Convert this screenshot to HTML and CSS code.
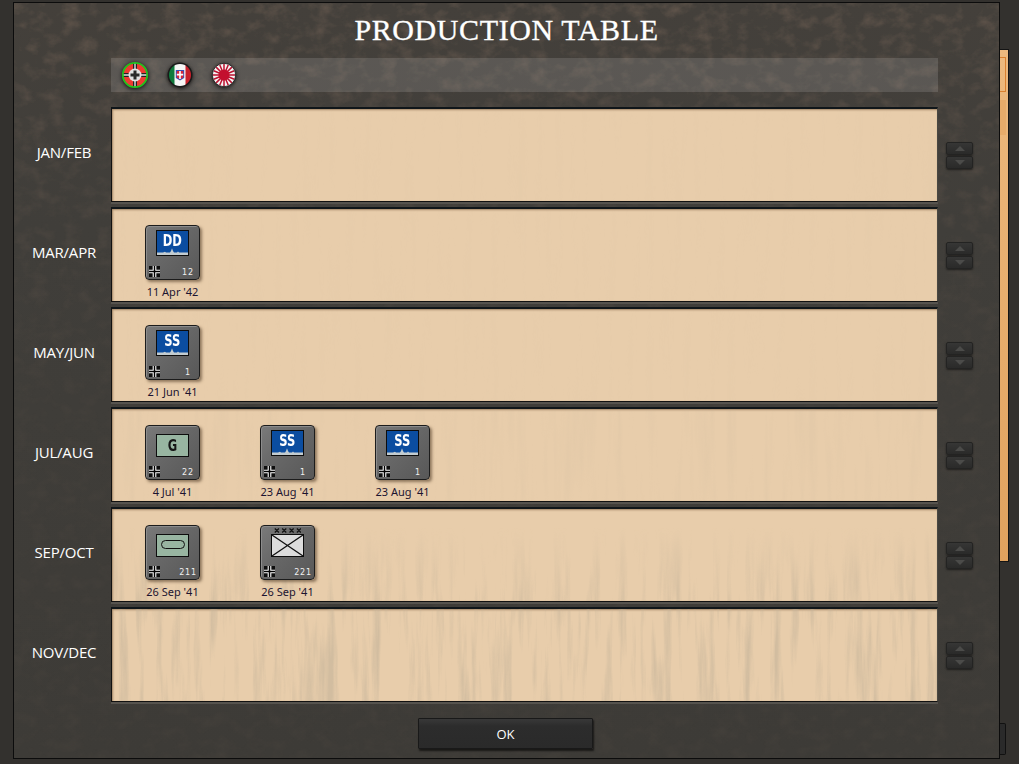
FILE: index.html
```html
<!DOCTYPE html>
<html lang="en">
<head>
    <meta charset="UTF-8">
    <title>Production Table</title>
    <link rel="stylesheet" href="styles.css">
</head>
<body>

<!-- shapes used by the counters and the nation bar -->
<svg class="defs" width="0" height="0" aria-hidden="true">
    <defs>
        <symbol id="cross" viewBox="0 0 12 12">
            <path d="M0 0h12v12H0z" fill="#0a0a0a" opacity=".95"/>
            <path d="M4 0h4v4h4v4H8v4H4V8H0V4h4z" fill="#fff"/>
            <path d="M5.200 0h1.600v5.200H12v1.600H6.800V12H5.200V6.800H0V5.200h5.200z" fill="#000"/>
        </symbol>
        <symbol id="ship" viewBox="0 0 31 6" preserveAspectRatio="none">
            <path d="M0 6V4.200h6l2-.7 1 .7h4l1-1.200 1-2 1 2 1 1.200h3l1-.8 1 .8h9V6z" fill="#c3ccd0"/>
        </symbol>
    </defs>
</svg>

<div class="behind-strip"></div>
<div class="behind-button"></div>

<div class="dialog">
    <h1 class="title">PRODUCTION TABLE</h1>

    <div class="nations">
        <svg class="flag flag-active" viewBox="0 0 28 28">
            <circle cx="14" cy="14" r="12.500" fill="#ee3a32"/>
            <path d="M1.500 12h25v4h-25zM12 1.500h4v25h-4z" fill="#222"/>
            <path d="M1.500 13.300h25v1.400h-25zM13.300 1.500h1.400v25h-1.400z" fill="#ddd"/>
            <circle cx="14" cy="14" r="6.500" fill="#e2e2e2"/>
            <path d="M12.500 9.500h3v3h3v3h-3v3h-3v-3h-3v-3h3z" fill="#2a2a2a"/>
            <circle cx="14" cy="14" r="12.200" fill="none" stroke="#1fc41c" stroke-width="1.800"/>
        </svg>
        <svg class="flag" viewBox="0 0 28 28">
            <clipPath id="italy"><circle cx="14" cy="14" r="11"/></clipPath>
            <circle cx="14" cy="14" r="12.500" fill="#1a1a1a"/>
            <g clip-path="url(#italy)">
                <path d="M3 3h6v22H3z" fill="#0f7a3c"/>
                <path d="M19 3h6v22h-6z" fill="#c8202c"/>
                <path d="M8.500 3h11v22h-11z" fill="#f6f6f6"/>
                <path d="M9.800 9h8.400v8l-4.200 2.500L9.800 17z" fill="#3a50b8"/>
                <path d="M10.800 10h6.400v6.500L14 18.300l-3.200-1.800z" fill="#d8283a"/>
                <path d="M13.200 10h1.600v8h-1.600zM10.800 12.800h6.400v1.600h-6.400z" fill="#fff"/>
            </g>
        </svg>
        <svg class="flag" viewBox="0 0 28 28">
            <circle cx="14" cy="14" r="11.500" fill="#f6f2f2"/>
            <g stroke="#bb1230" stroke-width="1.500">
                <path d="M14 14V2.800M14 14l4.300-10.300M14 14l7.900-7.900M14 14l10.300-4.300M14 14h11.200M14 14l10.300 4.300M14 14l7.900 7.900M14 14l4.300 10.300M14 14v11.200M14 14l-4.300 10.300M14 14l-7.900 7.900M14 14L3.700 18.300M14 14H2.800M14 14L3.700 9.700M14 14L6.100 6.100M14 14L9.700 3.700"/>
            </g>
            <circle cx="14" cy="14" r="5.500" fill="#c3102e"/>
            <circle cx="14" cy="14" r="11.700" fill="none" stroke="#1a1a1a" stroke-width=".8"/>
        </svg>
    </div>

    <div class="schedule">
        <div class="turn">
            <div class="month">JAN/FEB</div>
            <div class="paper stain-1"></div>
            <div class="spinner"><button class="spin spin-up"></button><button class="spin spin-down"></button></div>
        </div>

        <div class="turn">
            <div class="month">MAR/APR</div>
            <div class="paper stain-1">
                <div class="unit">
                    <div class="counter">
                        <div class="box box-sea"><span>DD</span><svg class="ship"><use href="#ship"/></svg></div>
                        <svg class="cross"><use href="#cross"/></svg>
                        <span class="strength">12</span>
                    </div>
                    <div class="date">11 Apr '42</div>
                </div>
            </div>
            <div class="spinner"><button class="spin spin-up"></button><button class="spin spin-down"></button></div>
        </div>

        <div class="turn">
            <div class="month">MAY/JUN</div>
            <div class="paper stain-1">
                <div class="unit">
                    <div class="counter">
                        <div class="box box-sea"><span>SS</span><svg class="ship"><use href="#ship"/></svg></div>
                        <svg class="cross"><use href="#cross"/></svg>
                        <span class="strength">1</span>
                    </div>
                    <div class="date">21 Jun '41</div>
                </div>
            </div>
            <div class="spinner"><button class="spin spin-up"></button><button class="spin spin-down"></button></div>
        </div>

        <div class="turn">
            <div class="month">JUL/AUG</div>
            <div class="paper stain-2">
                <div class="unit">
                    <div class="counter">
                        <div class="box box-land"><span>G</span></div>
                        <svg class="cross"><use href="#cross"/></svg>
                        <span class="strength">22</span>
                    </div>
                    <div class="date">4 Jul '41</div>
                </div>
                <div class="unit">
                    <div class="counter">
                        <div class="box box-sea"><span>SS</span><svg class="ship"><use href="#ship"/></svg></div>
                        <svg class="cross"><use href="#cross"/></svg>
                        <span class="strength">1</span>
                    </div>
                    <div class="date">23 Aug '41</div>
                </div>
                <div class="unit">
                    <div class="counter">
                        <div class="box box-sea"><span>SS</span><svg class="ship"><use href="#ship"/></svg></div>
                        <svg class="cross"><use href="#cross"/></svg>
                        <span class="strength">1</span>
                    </div>
                    <div class="date">23 Aug '41</div>
                </div>
            </div>
            <div class="spinner"><button class="spin spin-up"></button><button class="spin spin-down"></button></div>
        </div>

        <div class="turn">
            <div class="month">SEP/OCT</div>
            <div class="paper stain-3">
                <div class="unit">
                    <div class="counter">
                        <div class="box box-land"><i class="armor"></i></div>
                        <svg class="cross"><use href="#cross"/></svg>
                        <span class="strength">211</span>
                    </div>
                    <div class="date">26 Sep '41</div>
                </div>
                <div class="unit">
                    <div class="counter">
                        <div class="size">
                            <svg viewBox="0 0 33 6"><path d="M1 .5l5 5m0-5l-5 5M10 .5l5 5m0-5l-5 5M19 .5l5 5m0-5l-5 5M28 .5l5 5m0-5l-5 5" stroke="#111" stroke-width="1.500"/></svg>
                        </div>
                        <div class="box box-army">
                            <svg viewBox="0 0 33 22" preserveAspectRatio="none"><path d="M0 0l33 22M33 0L0 22" stroke="#111" stroke-width="1.300"/></svg>
                        </div>
                        <svg class="cross"><use href="#cross"/></svg>
                        <span class="strength">221</span>
                    </div>
                    <div class="date">26 Sep '41</div>
                </div>
            </div>
            <div class="spinner"><button class="spin spin-up"></button><button class="spin spin-down"></button></div>
        </div>

        <div class="turn">
            <div class="month">NOV/DEC</div>
            <div class="paper stain-4"></div>
            <div class="spinner"><button class="spin spin-up"></button><button class="spin spin-down"></button></div>
        </div>
    </div>

    <div class="actions">
        <button class="ok">OK</button>
    </div>
</div>

</body>
</html>
```

FILE: styles.css
```css
html, body {
    height: 100%;
}
body {
    margin: 0;
    background-color: #33312e;
    overflow: hidden;
    font-family: 'Open Sans', 'Noto Sans', sans-serif;
    display: flex;
    align-items: flex-start;
}
.defs {
    position: absolute;
}

/* bits of the window behind the dialog */
.behind-strip {
    position: absolute;
    left: 999px;
    top: 49px;
    width: 9px;
    height: 511px;
    background: linear-gradient(#ecb97e, #e6ab6a 60%, #e0a25e);
    border-top: 1px solid #141414;
    border-right: 1px solid #141414;
    border-bottom: 1px solid #141414;
}
.behind-strip:before {
    content: '';
    position: absolute;
    left: 0;
    right: 2px;
    top: 7px;
    height: 33px;
    border: 1px solid #d9802f;
    border-left: 0;
    box-shadow: 0 43px 0 #e6ab6a;
}
.behind-button {
    position: absolute;
    left: 999px;
    top: 723px;
    width: 6px;
    height: 30px;
    background-color: #2a2a2a;
    border: 1px solid #111;
    border-left: 0;
    border-radius: 0 2px 2px 0;
}

.dialog {
    position: relative;
    margin: 2px 0 0 13px;
    width: 985px;
    height: 755px;
    border: 1px solid #0c0c0c;
    box-sizing: content-box;
    background-color: #3f3d39;
    background-image:
        url("data:image/svg+xml,%3Csvg xmlns='http://www.w3.org/2000/svg' width='985' height='755'%3E%3Cfilter id='n'%3E%3CfeTurbulence type='fractalNoise' baseFrequency='.06 .08' numOctaves='4' seed='4'/%3E%3CfeColorMatrix values='0 0 0 0 .22 0 0 0 0 .15 0 0 0 0 .11 1.400 0 0 0 -.62'/%3E%3C/filter%3E%3ClinearGradient id='f' x1='0' y1='0' x2='0' y2='1'%3E%3Cstop offset='0' stop-color='%23aaa'/%3E%3Cstop offset='.22' stop-color='%23555'/%3E%3Cstop offset='.5' stop-color='%23222'/%3E%3Cstop offset='1' stop-color='%23222'/%3E%3C/linearGradient%3E%3Cmask id='m'%3E%3Crect width='985' height='755' fill='url(%23f)'/%3E%3C/mask%3E%3Crect width='985' height='755' filter='url(%23n)' mask='url(%23m)'/%3E%3C/svg%3E"),
        linear-gradient(#44403b, #403e3a 30%, #3d3b37);
}
.title {
    margin: 0;
    height: 55px;
    line-height: 53px;
    text-align: center;
    color: #fff;
    font-family: 'Liberation Serif', serif;
    font-size: 30px;
    font-weight: normal;
    letter-spacing: 0.6px;
    -webkit-text-stroke: 0.3px #fff;
}
.nations {
    margin-left: 97px;
    width: 827px;
    height: 34px;
    display: flex;
    align-items: center;
    gap: 16.5px;
    padding-left: 10px;
    box-sizing: border-box;
    background-color: rgba(255, 255, 255, 0.13);
}
.flag {
    width: 28px;
    height: 28px;
    filter: drop-shadow(0 1px 2px rgba(0, 0, 0, 0.8));
}

.schedule {
    margin-top: 15px;
    display: flex;
    flex-direction: column;
    gap: 5px;
}
.turn {
    display: flex;
    height: 95px;
}
.month {
    width: 97px;
    padding-left: 3px;
    box-sizing: border-box;
    line-height: 90px;
    text-align: center;
    color: #fff;
    font-size: 15px;
    letter-spacing: -0.2px;
}
.paper {
    position: relative;
    width: 827px;
    box-sizing: border-box;
    padding: 16px 0 0 33px;
    display: flex;
    gap: 60px;
    background-color: #e8cdab;
    border: 1px solid #111;
    border-top: 2px solid #10161a;
    border-right-color: #4a4842;
    box-shadow: 0 2px 0 #56534e, inset 1px 1px 2px rgba(90, 60, 30, 0.5);
}
.paper:before {
    content: '';
    position: absolute;
    inset: 0;
    background-image: url("data:image/svg+xml,%3Csvg xmlns='http://www.w3.org/2000/svg' width='1019' height='764'%3E%3Cfilter id='s'%3E%3CfeTurbulence type='fractalNoise' baseFrequency='.11 .008' numOctaves='4' seed='9'/%3E%3CfeColorMatrix values='0 0 0 0 .55 0 0 0 0 .45 0 0 0 0 .32 3 0 0 0 -1.450'/%3E%3C/filter%3E%3Crect width='1019' height='764' filter='url(%23s)'/%3E%3C/svg%3E");
    background-attachment: fixed;
}
.stain-1:before { opacity: 0.03; }
.stain-2:before { opacity: 0.1; }
.stain-3:before {
    opacity: 0.55;
    -webkit-mask-image: linear-gradient(transparent 20%, #000);
    mask-image: linear-gradient(transparent 20%, #000);
}
.stain-4:before { opacity: 0.6; }

.unit {
    position: relative;
    width: 55px;
    display: flex;
    flex-direction: column;
    align-items: center;
}
.counter {
    position: relative;
    width: 55px;
    height: 55px;
    box-sizing: border-box;
    border: 1px solid #1c1c1c;
    border-radius: 4px;
    background: linear-gradient(135deg, #7a7a7a, #676767 45%, #585858);
    box-shadow: 2px 2px 3px rgba(70, 50, 30, 0.55), inset 1px 1px 0 #8c8c8c;
}
.box {
    position: absolute;
    left: 10px;
    width: 33px;
    height: 23px;
    border: 1px solid #0d0d0d;
    box-sizing: border-box;
    text-align: center;
}
.box span {
    display: inline-block;
    transform: scaleX(0.72);
}
.box-sea {
    top: 4px;
    height: 26px;
    background-color: #0b4da0;
    color: #fff;
    font: bold 16px/19px 'DejaVu Sans', sans-serif;
}
.box-land {
    top: 8px;
    background-color: #98b5a1;
    color: #151515;
    font: bold 16px/21px 'DejaVu Sans', sans-serif;
}
.box-army {
    top: 8px;
    background-color: #dcdcdc;
}
.box-army svg {
    display: block;
    width: 100%;
    height: 100%;
}
.ship {
    position: absolute;
    left: 0;
    bottom: 0;
    width: 31px;
    height: 8px;
}
.armor {
    display: block;
    margin: 5px auto 0;
    width: 24px;
    height: 9px;
    box-sizing: border-box;
    border: 1px solid #111;
    border-radius: 5px;
}
.size {
    position: absolute;
    left: 13px;
    top: 2px;
    width: 27px;
}
.size svg {
    display: block;
    width: 100%;
    height: 5px;
}
.cross {
    position: absolute;
    left: 3px;
    bottom: 2px;
    width: 11px;
    height: 11px;
}
.strength {
    position: absolute;
    left: 27px;
    width: 30px;
    bottom: 1px;
    text-align: center;
    color: #f0f0f0;
    font: 8px/10px 'DejaVu Sans', sans-serif;
    letter-spacing: 0.8px;
}
.date {
    margin-top: 5px;
    white-space: nowrap;
    color: #1c1430;
    font: 11px/14px 'Noto Sans', sans-serif;
}

.spinner {
    margin: 35px 0 0 8px;
    width: 27px;
    display: flex;
    flex-direction: column;
    gap: 1px;
}
.spin {
    position: relative;
    display: block;
    padding: 0;
    height: 13px;
    border: 1px solid #232322;
    border-radius: 2px;
    background: linear-gradient(#363635, #2a2a29);
    box-shadow: 0 1px 2px rgba(0, 0, 0, 0.5);
}
.spin:after {
    content: '';
    position: absolute;
    left: 8px;
    border-left: 5px solid transparent;
    border-right: 5px solid transparent;
}
.spin-up:after {
    top: 3px;
    border-bottom: 5px solid #4b4b49;
}
.spin-down:after {
    top: 3px;
    border-top: 5px solid #4b4b49;
}

.actions {
    margin-top: 16px;
    display: flex;
    justify-content: center;
}
.ok {
    margin-left: -2px;
    width: 175px;
    height: 31px;
    padding: 0;
    border: 1px solid #191919;
    border-radius: 1px;
    background: linear-gradient(#383838, #2c2c2c 25%, #2a2a2a);
    box-shadow: 1px 2px 2px rgba(0, 0, 0, 0.6);
    color: #fff;
    font-family: 'Open Sans', 'Noto Sans', sans-serif;
    font-size: 13px;
}
```
